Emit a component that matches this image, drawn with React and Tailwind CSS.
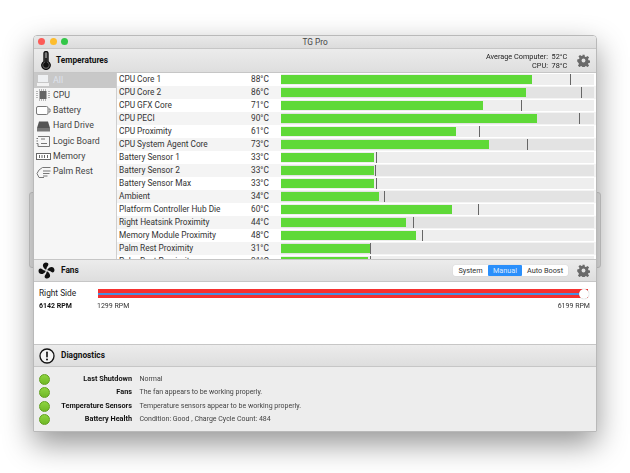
import React from 'react';

const sensors = [
    { name: 'CPU Core 1', temp: '88°C', end: 532, mark: 570 },
    { name: 'CPU Core 2', temp: '86°C', end: 526, mark: 581 },
    { name: 'CPU GFX Core', temp: '71°C', end: 483, mark: 521 },
    { name: 'CPU PECI', temp: '90°C', end: 537, mark: 579 },
    { name: 'CPU Proximity', temp: '61°C', end: 456, mark: 479 },
    { name: 'CPU System Agent Core', temp: '73°C', end: 489, mark: 527 },
    { name: 'Battery Sensor 1', temp: '33°C', end: 374, mark: 376 },
    { name: 'Battery Sensor 2', temp: '33°C', end: 374, mark: 375 },
    { name: 'Battery Sensor Max', temp: '33°C', end: 374, mark: 376 },
    { name: 'Ambient', temp: '34°C', end: 379, mark: 384 },
    { name: 'Platform Controller Hub Die', temp: '60°C', end: 452, mark: 478 },
    { name: 'Right Heatsink Proximity', temp: '44°C', end: 406, mark: 413 },
    { name: 'Memory Module Proximity', temp: '48°C', end: 416, mark: 422 },
    { name: 'Palm Rest Proximity', temp: '31°C', end: 371, mark: 370 },
    { name: 'Palm Rest Proximity', temp: '31°C', end: 368, mark: 370 },
];

const diagnostics = [
    { label: 'Last Shutdown', text: 'Normal' },
    { label: 'Fans', text: 'The fan appears to be working properly.' },
    { label: 'Temperature Sensors', text: 'Temperature sensors appear to be working properly.' },
    { label: 'Battery Health', text: 'Condition: Good , Charge Cycle Count: 484' },
];

const Gear = () => (
    <svg width="13" height="13" viewBox="0 0 24 24" fill="#6a6a6a">
        <path d="M10 1h4l.6 3.4 2 .8L19.500 3.300l2.800 2.800-2 2.800.9 2 3.400.6v4l-3.400.6-.9 2 2 2.800-2.800 2.800-2.900-2-2 .9-.6 3.400h-4l-.6-3.400-2-.9-2.900 2-2.800-2.800 2-2.800-.9-2L.4 13.500v-4l3.400-.6.9-2-2-2.800L5.500 1.300l2.900 2 2-.8z" transform="translate(0 .5)" />
        <circle cx="12" cy="12" r="3.500" fill="#e3e3e3" />
    </svg>
);

const Thermometer = () => (
    <svg width="12" height="19" viewBox="0 0 12 19">
        <path d="M4 2.500a2 2 0 0 1 4 0V10.500a4.200 4.200 0 1 1-4 0z" fill="#777" stroke="#111" strokeWidth="1.400" />
        <circle cx="6" cy="14" r="2.800" fill="#111" />
        <rect x="5.200" y="7" width="1.600" height="6" fill="#111" />
    </svg>
);

const Fan = () => (
    <svg width="17" height="17" viewBox="0 0 18 18" fill="#111">
        <path d="M8 8C6 7 4 3.500 6 1.500 8-.2 11 .6 11 2.500 11 4.500 9 5 8.800 8z" />
        <path d="M10 8c1-2 4.500-4 6.500-2 1.700 2 .9 5-1 5-2 0-2.500-2-5.500-2.200z" />
        <path d="M10 10c2 1 4 4.500 2 6.500-2 1.700-5 .9-5-1 0-2 2-2.500 2.200-5.500z" />
        <path d="M8 10c-1 2-4.500 4-6.500 2C-.2 10 .6 7 2.500 7c2 0 2.500 2 5.500 2.200z" />
    </svg>
);

const Alert = () => (
    <svg width="16" height="16" viewBox="0 0 16 16">
        <circle cx="8" cy="8" r="7" fill="#f4f4f4" stroke="#111" strokeWidth="1.300" />
        <rect x="7.200" y="3.500" width="1.600" height="6" rx=".7" fill="#111" />
        <circle cx="8" cy="11.500" r="1" fill="#111" />
    </svg>
);

const sideIcons = {
    all: (
        <svg width="14" height="13" viewBox="0 0 14 13">
            <rect x="2" y="1" width="10" height="7" fill="#eef0f2" />
            <rect x="1" y="9" width="12" height="3" fill="#f2f2f2" />
        </svg>
    ),
    cpu: (
        <svg width="14" height="12" viewBox="0 0 14 12" fill="none" stroke="#777">
            <rect x="3.500" y="2" width="7" height="8" fill="#666" stroke="none" />
            <path d="M1 2v8M13 2v8M3 1h8M3 11h8" strokeDasharray="1 1" />
        </svg>
    ),
    battery: (
        <svg width="15" height="9" viewBox="0 0 15 9" fill="none" stroke="#777">
            <rect x=".5" y=".5" width="11.500" height="8" rx="1.500" fill="#fff" />
            <path d="M12.500 3h1.500v3h-1.500" />
        </svg>
    ),
    drive: (
        <svg width="15" height="11" viewBox="0 0 15 11">
            <path d="M3 .5h9l2 6.500H1z" fill="#555" />
            <rect x="1" y="7" width="13" height="3.500" fill="#777" />
        </svg>
    ),
    board: (
        <svg width="14" height="11" viewBox="0 0 14 11" fill="none" stroke="#777">
            <path d="M2 .5h11.500v10H2v-3H.5M2 5H.5M2 2.500H.5" />
            <path d="M5 3h4M5 7.500h6" />
        </svg>
    ),
    memory: (
        <svg width="15" height="7" viewBox="0 0 15 7" fill="#fff" stroke="#666">
            <rect x=".5" y=".5" width="14" height="6" />
            <path d="M3.500 2v3M6 2v3M8.500 2v3M11.500 2v3" />
        </svg>
    ),
    palm: (
        <svg width="15" height="13" viewBox="0 0 15 13" fill="none" stroke="#777">
            <path d="M14.500 2.500H6.500L3 5 1 8.500 3 12.500h5M7 6h7.500M7 8.500h6.500M7 11h4.500" />
        </svg>
    ),
};

const sideItems = [
    { name: 'All', icon: 'all' },
    { name: 'CPU', icon: 'cpu' },
    { name: 'Battery', icon: 'battery' },
    { name: 'Hard Drive', icon: 'drive' },
    { name: 'Logic Board', icon: 'board' },
    { name: 'Memory', icon: 'memory' },
    { name: 'Palm Rest', icon: 'palm' },
];

const SectionHeader = ({ icon, title, children }) => (
    <div className="flex h-[23px] items-center border-y border-[#c6c6c6] bg-gradient-to-b from-[#ececec] to-[#dedede] pr-[6.500px]">
        <div className="mr-[2px] flex w-[25px] shrink-0 justify-center">{icon}</div>
        <span className="text-[8.300px] font-bold text-[#111]">{title}</span>
        <div className="ml-auto flex items-center">{children}</div>
    </div>
);

export default function App() {
    return (
        <div className="relative h-[473px] w-[630px] overflow-hidden bg-white pl-[33px] pt-[35px] font-['Roboto','Liberation_Sans',sans-serif] text-[8.300px] text-[#333]">
            {/* window sitting behind, only its edges show */}
            <div className="absolute left-[29px] top-[192px] h-[76px] w-[572px] rounded-[3px] border border-[#d6d6d6] bg-[#efefef]" />
            <div className="relative flex h-[397px] w-[564px] flex-col overflow-hidden rounded-t-[4px] border border-[#b9b9b9] shadow-[0_12px_30px_rgba(0,0,0,0.42)]">
                {/* title bar */}
                <div className="relative flex h-[12px] shrink-0 items-center justify-center bg-gradient-to-b from-[#e9e9e9] to-[#dcdcdc] text-[8.300px] text-[#444]">
                    <div className="absolute left-[4px] top-[2px] flex gap-[4.500px]">
                        <span className="h-[7px] w-[7px] rounded-full bg-[#fc5b57]" />
                        <span className="h-[7px] w-[7px] rounded-full bg-[#fdbd2e]" />
                        <span className="h-[7px] w-[7px] rounded-full bg-[#33c748]" />
                    </div>
                    TG Pro
                </div>

                {/* temperatures */}
                <div className="flex h-[25px] shrink-0 items-center border-y border-[#c6c6c6] bg-gradient-to-b from-[#ececec] to-[#dedede] pr-[6.500px]">
                    <div className="flex w-[22px] shrink-0 justify-center pl-[2px]"><Thermometer /></div>
                    <span className="text-[8.300px] font-bold text-[#111]">Temperatures</span>
                    <div className="ml-auto mr-[9px] text-right text-[7.300px] leading-[9px] text-[#222] [will-change:transform]">
                        <div>Average Computer: &nbsp;52°C</div>
                        <div>CPU: &nbsp;78°C</div>
                    </div>
                    <Gear />
                </div>

                <div className="flex h-[186px] shrink-0 overflow-hidden bg-white">
                    <div className="w-[83px] shrink-0 border-r border-[#cfcfcf] bg-[#f6f6f6]">
                        {sideItems.map((item, i) => (
                            <div key={item.name} className={`flex h-[15.300px] items-center gap-[2px] pb-[1px] pl-[1px] ${i === 0 ? 'bg-[#c8c8c8]' : ''}`}>
                                <span className="flex w-[16px] justify-center">{sideIcons[item.icon]}</span>
                                <span className={`text-[8.800px] ${i === 0 ? 'text-[#dfe3ec]' : 'text-[#444]'}`}>{item.name}</span>
                            </div>
                        ))}
                    </div>
                    <div className="min-w-0 flex-1">
                        {sensors.map((row, i) => (
                            <div key={i} className={`flex h-[13px] shrink-0 items-center pl-[2px] pr-[2px] ${i % 2 ? 'bg-[#f4f4f4]' : 'bg-white'}`}>
                                <span className="w-[132px] shrink-0 whitespace-nowrap text-[#333]">{row.name}</span>
                                <span className="w-[30px] shrink-0 text-[#333]">{row.temp}</span>
                                <div className={`relative h-[11px] flex-1 ${i % 2 ? 'bg-[#e3e3e3]' : 'bg-[#eeeeee]'}`}>
                                    <div className="mt-[1px] h-[9px] bg-[#5fd938]" style={{ width: row.end - 281 }} />
                                    <div className="absolute top-0 h-[11px] w-[1px] bg-[#666]" style={{ left: row.mark - 281 }} />
                                </div>
                            </div>
                        ))}
                    </div>
                </div>

                {/* fans */}
                <div className="shrink-0">
                    <SectionHeader icon={<Fan />} title="Fans">
                        <div className="mr-[8.500px] flex h-[11px] items-center rounded-[2px] bg-white text-[7.300px] leading-[11px] text-[#333] shadow-[0_0_1px_rgba(0,0,0,0.2)]">
                            <span className="w-[35px] text-center">System</span>
                            <span className="w-[34px] rounded-[1px] bg-[#2a8ffb] text-center text-[#dbe9ff]">Manual</span>
                            <span className="w-[46px] text-center">Auto Boost</span>
                        </div>
                        <Gear />
                    </SectionHeader>
                </div>
                <div className="h-[62px] shrink-0 bg-white px-[5px] pt-[5px]">
                    <div className="flex h-[13px] items-center leading-[13px]">
                        <span className="w-[59px] shrink-0 text-[#222]">Right Side</span>
                        <div className="relative h-[9px] w-[490px] bg-[#f6302f] pt-[4px]">
                            <div className="h-[2px] w-full bg-[#4a8fe0]" />
                            <div className="absolute right-[-1px] top-[-0.500px] h-[10px] w-[10px] rounded-full bg-white shadow-[0_0_1px_rgba(0,0,0,0.4)]" />
                        </div>
                    </div>
                    <div className="flex text-[7px] leading-[12px] text-[#333] [will-change:transform]">
                        <span className="w-[58px] shrink-0 font-bold text-[#111]">6142 RPM</span>
                        <span>1299 RPM</span>
                        <span className="ml-auto mr-[1px]">6199 RPM</span>
                    </div>
                </div>

                {/* diagnostics */}
                <div className="shrink-0">
                    <SectionHeader icon={<Alert />} title="Diagnostics" />
                </div>
                <div className="min-h-0 flex-1 bg-[#ededed] pl-[5px] pt-[5px]">
                    {diagnostics.map((d, i) => (
                        <div key={d.label} className={`flex items-center [will-change:transform] ${i % 2 ? 'h-[13px]' : 'h-[14px]'}`}>
                            <span className="h-[11px] w-[11px] shrink-0 rounded-full border border-[#5f9e1c] bg-gradient-to-b from-[#8ed43f] to-[#6fb825]" />
                            <span className="w-[82px] shrink-0 text-right text-[7.300px] font-bold text-[#111]">{d.label}</span>
                            <span className="ml-[7.500px] text-[7px] text-[#444]">{d.text}</span>
                        </div>
                    ))}
                </div>
            </div>
        </div>
    );
}
